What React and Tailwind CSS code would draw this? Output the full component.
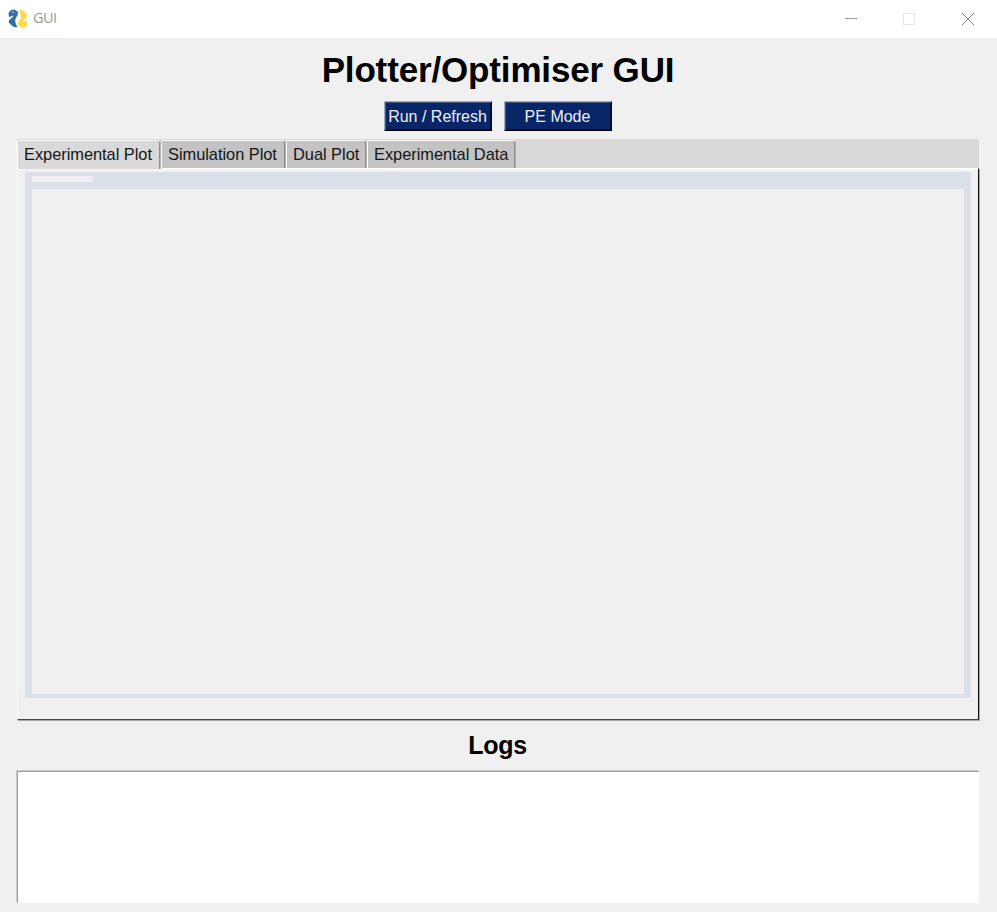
const tabs = [
  { label: "Experimental Plot", box: "z-10 w-[144px] h-[29px] bg-[#d9d9d9] border-b-0" },
  { label: "Simulation Plot", box: "w-[125px] h-[28px] bg-[#c3c3c3]" },
  { label: "Dual Plot", box: "w-[81px] h-[28px] bg-[#c3c3c3]" },
  { label: "Experimental Data", box: "w-[149px] h-[28px] bg-[#c3c3c3]" },
];

function PythonIcon() {
  return (
    <svg width="20" height="20" viewBox="0 0 20 20" className="block">
      <path d="M3 1.2Q6.4-.4 9.2 2.2Q10.8 4.5 9 7Q7 9.5 7.2 12.3Q7.4 15 9.4 17.7Q6.3 19.2 4 16.8L1.2 14Q-.1 12 1.8 10.4L5.3 7.2L4.3 6.4L1.5 8.4L.4 5.2Q.6 2.3 3 1.2Z" fill="#32709f" />
      <path d="M10.8 1.2Q13.7 0 16 2.3L18.6 4.8Q20 7 18 9L14.5 12.2L15.7 13.1L18.5 11.1L19.4 14Q19.3 17 16.8 18.2Q13.6 19.7 11.1 17.2Q9 14.7 11 12.1Q13.1 9.5 12.8 7Q12.6 4 10.8 1.2Z" fill="#ffd94c" />
      <circle cx="5" cy="3.2" r=".7" fill="#dceaf3" />
      <circle cx="15.4" cy="16.1" r=".7" fill="#fff8d0" />
    </svg>
  );
}

function Button({ children }) {
  return (
    <button className="flex h-[30px] w-[108px] items-center justify-center border border-t-[#a0acc2] border-l-[#a0acc2] border-r-black border-b-black bg-[#082567] pt-px pr-px whitespace-nowrap text-[16px] leading-none text-[#eef1f6] shadow-[inset_1px_1px_0_#3f5482,inset_-1px_-1px_0_#04123a]">
      {children}
    </button>
  );
}

export default function App() {
  return (
    <div className="flex h-[912px] w-[997px] flex-col overflow-hidden bg-[#f0f0f0] font-['Liberation_Sans',sans-serif] text-black">
      <header className="flex h-[38px] shrink-0 items-center bg-white pl-2">
        <div className="h-5 w-5"><PythonIcon /></div>
        <span className="ml-[5px] pb-px font-['Open_Sans',sans-serif] text-[14.5px] leading-none tracking-[-0.5px] text-[#999]">GUI</span>
        <svg className="ml-auto block" width="167" height="38" shapeRendering="crispEdges" fill="none">
          <path d="M15 18.5H27" stroke="#999" />
          <rect x="73.5" y="13.5" width="11" height="11" stroke="#e6e6e6" />
          <path d="M132 13L144 25M144 13L132 25" stroke="#858585" shapeRendering="auto" />
        </svg>
      </header>
      <main className="flex flex-1 flex-col pr-[18px] pl-[17px]">
        <h1 className="flex h-[62px] items-center justify-center whitespace-nowrap text-[35px] font-bold leading-none tracking-[-0.15px]">Plotter/Optimiser GUI</h1>
        <div className="flex h-[31px] items-end justify-center gap-3">
          <Button>Run / Refresh</Button>
          <Button>PE Mode</Button>
        </div>
        <nav className="mt-2 flex h-[29px] w-[962px] shrink-0 bg-[#d9d9d9]">
          {tabs.map((tab) => (
            <div
              key={tab.label}
              className={`${tab.box} relative mt-px flex shrink-0 items-center rounded-tl-[2px] rounded-tr-[3px] border-t border-r border-l border-t-[#f8f8f8] border-r-[#b0b0b0] border-l-white pb-px pl-[6px] whitespace-nowrap text-[16.4px] leading-none tracking-[-0.03px] text-[#151515] shadow-[inset_-1px_0_0_#8c8c8c]`}
            >
              {tab.label}
            </div>
          ))}
        </nav>
        <section className="h-[552px] w-[962px] shrink-0 border border-t-white border-r-[#111] border-b-[#444] border-l-white pt-[3px] pl-[7px] shadow-[1px_1px_0_#a8a8a8,inset_0_1px_0_#f8f8f8]">
          <div className="flex h-[526px] w-[946px] flex-col bg-[#dbe0e8] px-[7px] pt-1 pb-1">
            <div className="h-[6px] w-[61px] bg-[#f0f0f0]" />
            <div className="mt-[7px] w-[932px] flex-1 bg-[#f0f0f0]" />
          </div>
        </section>
        <h2 className="flex h-[51px] shrink-0 items-center justify-center pr-px text-[25px] font-bold leading-none tracking-[-0.25px]">Logs</h2>
        <div className="h-[132px] w-[962px] shrink-0 border-t border-l border-[#a0a0a0] bg-white shadow-[-1px_-1px_0_#cacaca]" />
      </main>
    </div>
  );
}
